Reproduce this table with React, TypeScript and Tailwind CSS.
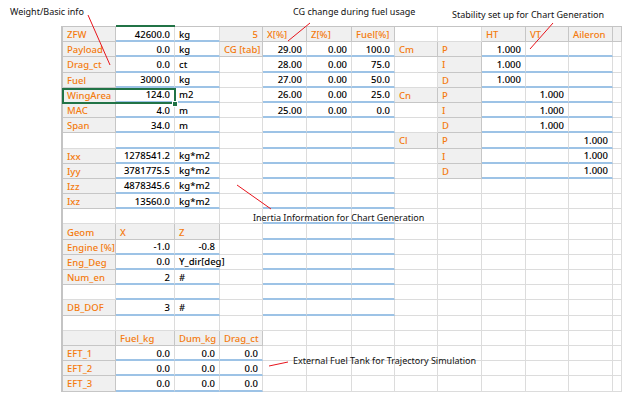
import clsx from "clsx";

type K = "l" | "h" | "v" | "u";
type Cl = { t?: string; k?: K; r?: boolean; b?: boolean; z?: boolean };

const ROWS = 24;
const COLS = 13;

const WIDTHS = [
  "w-[53px]",
  "w-[59px]",
  "w-[45px]",
  "w-[43px]",
  "w-[44px]",
  "w-[45px]",
  "w-[43px]",
  "w-[43px]",
  "w-[44px]",
  "w-[44px]",
  "w-[43px]",
  "w-[44px]",
  "w-[5px]",
];

function buildGrid() {
  const g: Cl[][] = Array.from({ length: ROWS }, () =>
    Array.from({ length: COLS }, () => ({}) as Cl)
  );
  const put = (r: number, c: number, t: string, k: K, right = false) => {
    g[r][c] = { ...g[r][c], t, k, r: right };
  };

  const labels = [
    "ZFW", "Payload", "Drag_ct", "Fuel", "WingArea", "MAC", "Span", null,
    "Ixx", "Iyy", "Izz", "Ixz", null, "Geom", "Engine [%]", "Eng_Deg", "Num_en", null,
    "DB_DOF", null, "", "EFT_1", "EFT_2", "EFT_3",
  ];
  labels.forEach((t, r) => {
    if (t !== null) put(r, 0, t, "l");
  });

  const colB = ["42600.0", "0.0", "0.0", "3000.0", "124.0", "4.0", "34.0", "", "1278541.2", "3781775.5", "4878345.6", "13560.0"];
  const colC = ["kg", "kg", "ct", "kg", "m2", "m", "m", "", "kg*m2", "kg*m2", "kg*m2", "kg*m2"];
  colB.forEach((t, r) => t && put(r, 1, t, "v", true));
  colC.forEach((t, r) => t && put(r, 2, t, "u"));

  put(13, 1, "X", "h");
  put(13, 2, "Z", "h");
  put(14, 1, "-1.0", "v", true);
  put(14, 2, "-0.8", "v", true);
  put(15, 1, "0.0", "v", true);
  put(15, 2, "Y_dir[deg]", "u");
  g[15][2].z = true;
  put(16, 1, "2", "v", true);
  put(16, 2, "#", "u");
  put(18, 1, "3", "v", true);
  put(18, 2, "#", "u");

  put(20, 1, "Fuel_kg", "h");
  put(20, 2, "Dum_kg", "h");
  put(20, 3, "Drag_ct", "h");
  for (let r = 21; r <= 23; r++) {
    for (let c = 1; c <= 3; c++) {
      put(r, c, "0.0", "v", true);
      g[r][c].b = true;
    }
  }

  put(0, 3, "5", "h", true);
  put(1, 3, "CG [tab]", "h");

  put(0, 4, "X[%]", "h");
  put(0, 5, "Z[%]", "h");
  put(0, 6, "Fuel[%]", "h");
  const cg = [
    ["29.00", "0.00", "100.0"],
    ["28.00", "0.00", "75.0"],
    ["27.00", "0.00", "50.0"],
    ["26.00", "0.00", "25.0"],
    ["25.00", "0.00", "0.0"],
  ];
  cg.forEach((row, i) => row.forEach((t, j) => put(i + 1, 4 + j, t, "v", true)));

  put(1, 7, "Cm", "h");
  put(4, 7, "Cn", "h");
  put(7, 7, "Cl", "h");
  ["P", "I", "D", "P", "I", "D", "P", "I", "D"].forEach((t, i) => put(i + 1, 8, t, "h"));

  put(0, 9, "HT", "h");
  put(0, 10, "VT", "h");
  put(0, 11, "Aileron", "h");
  put(0, 12, "", "h");
  for (let i = 0; i < 9; i++) put(i + 1, 9 + Math.floor(i / 3), "1.000", "v", true);

  // blue underline of input cells
  for (let r = 0; r <= 18; r++) {
    if (r === 12 || r === 13) continue;
    g[r][1].b = true;
    g[r][2].b = true;
  }
  for (let r = 1; r <= 18; r++) for (let c = 4; c <= 6; c++) g[r][c].b = true;
  for (let r = 1; r <= 9; r++) for (let c = 9; c <= 11; c++) g[r][c].b = true;

  return g;
}

const grid = buildGrid();

function Cell({ c, w }: { c: Cl; w: string }) {
  const gray = c.k === "l" || c.k === "h";
  return (
    <div
      className={clsx(
        "box-border flex h-full shrink-0 items-center overflow-visible whitespace-nowrap border-r px-[4px] pt-[2px] leading-[12px]",
        w,
        gray ? "border-[#c6c6c6] bg-[#f0f0f0] text-[#f47b0e]" : "border-[#dcdcdc] text-black",
        c.b ? "border-b-2 border-b-[#9dc3e6]" : "border-b",
        c.r ? "justify-end" : "justify-start",
        c.z && "relative z-10"
      )}
    >
      {c.t}
    </div>
  );
}

function Note({ text, cls }: { text: string; cls: string }) {
  return (
    <div className={clsx("absolute whitespace-nowrap text-[9px] leading-[12px] text-[#111]", cls)}>{text}</div>
  );
}

export default function App() {
  return (
    <div
      className="relative h-[396px] w-[640px] overflow-hidden bg-white"
      style={{ fontFamily: '"Noto Sans", "Noto Sans CJK KR", sans-serif' }}
    >
      <div className="pl-[61px] pt-[26px]">
        <div className="w-fit border-l-2 border-t border-[#c4c4c4] text-[9.5px] font-medium">
          {grid.map((row, r) => (
            <div key={r} className="flex h-[15.2px]">
              {row.map((c, i) => (
                <Cell key={i} c={c} w={WIDTHS[i]} />
              ))}
            </div>
          ))}
        </div>
      </div>

      {/* active cell / column marker */}
      <div className="absolute left-[116px] top-[25px] h-[2px] w-[59px] bg-[#217346]" />
      <div className="absolute left-[62px] top-[88px] h-[16px] w-[114px] border-2 border-[#217346]" />
      <div className="absolute left-[172px] top-[101px] h-[6px] w-[6px] border border-white bg-[#217346]" />

      <Note text="Weight/Basic info" cls="left-[10px] top-[6px]" />
      <Note text="CG change during fuel usage" cls="left-[293px] top-[6px]" />
      <Note text="Stability set up for Chart Generation" cls="left-[452px] top-[9px]" />
      <Note text="Inertia Information for Chart Generation" cls="left-[253px] top-[212px]" />
      <Note text="External Fuel Tank for Trajectory Simulation" cls="left-[293px] top-[355px]" />

      <svg className="pointer-events-none absolute left-0 top-0" width="640" height="396">
        <g stroke="#e8141c" strokeWidth="1">
          <line x1="88" y1="15" x2="110" y2="65" />
          <line x1="310" y1="23" x2="288" y2="41" />
          <line x1="553" y1="23" x2="530" y2="49" />
          <line x1="237" y1="185" x2="271" y2="209" />
          <line x1="269" y1="366" x2="288" y2="362" />
        </g>
      </svg>
    </div>
  );
}
